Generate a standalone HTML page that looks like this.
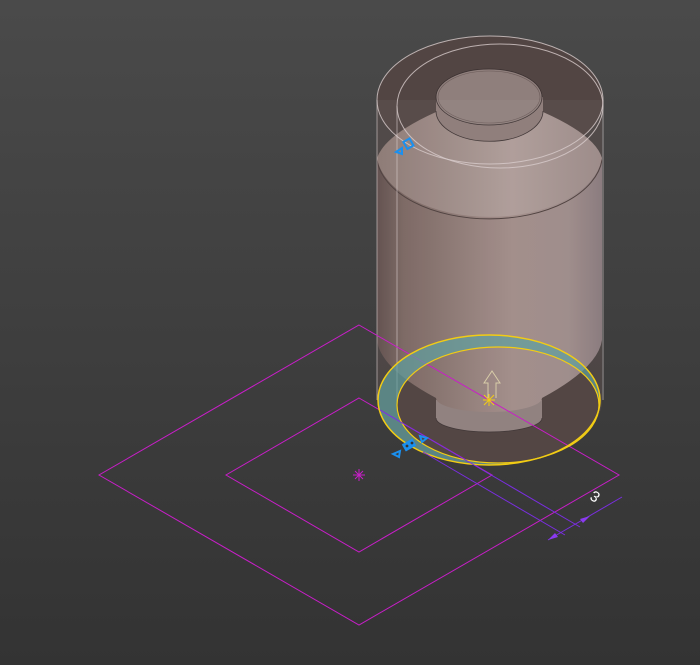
<!DOCTYPE html>
<html><head><style>
html,body{margin:0;padding:0;width:700px;height:665px;overflow:hidden;background:linear-gradient(#4a4a4a,#333333);}
svg{display:block}
</style></head><body>
<svg width="700" height="665" viewBox="0 0 700 665" xmlns="http://www.w3.org/2000/svg">
<defs>
<linearGradient id="body" x1="0" x2="1" y1="0" y2="0">
<stop offset="0" stop-color="#5e4d4b"/>
<stop offset="0.12" stop-color="#796560"/>
<stop offset="0.6" stop-color="#a08b87"/>
<stop offset="0.85" stop-color="#9c8a88"/>
<stop offset="1" stop-color="#87777a"/>
</linearGradient>
<linearGradient id="sh" x1="0" x2="1">
<stop offset="0" stop-color="#8a7772"/>
<stop offset="0.6" stop-color="#ad9b97"/>
<stop offset="1" stop-color="#9a8886"/>
</linearGradient>
</defs>
<ellipse cx="489" cy="400" rx="111" ry="64" fill="#4b3d3b"/>
<path d="M377 100 L377 400 A112 64 0 0 0 602 400 L602 100 Z" fill="#4f4240" opacity="0.55"/>
<ellipse cx="490" cy="100" rx="113" ry="64" fill="#524543"/>
<path d="M436 400 L436 418 A53 14 0 0 0 542 418 L542 400 Z" fill="#8d7d7b"/>
<path d="M436 418 A53 14 0 0 0 542 418" fill="none" stroke="#3a3030" stroke-width="0.8"/>
<path d="M377 160 L377 340 Q380 368 436 398 A53 14 0 0 0 542 398 Q598 368 602 340 L602 160 Z" fill="url(#body)"/>
<path d="M436 112 Q385 135 377 158 A113 65 0 0 0 602 158 Q595 135 543 112 Z" fill="url(#sh)"/>
<path d="M377 160 A113 65 0 0 0 602 160" fill="none" stroke="#4a3c3a" stroke-width="1"/>
<path d="M436 97 L436 111 A53 30 0 0 0 543 111 L543 97 Z" fill="#8c7a77"/>
<path d="M436 111 A53 30 0 0 0 543 111" fill="none" stroke="#3a3030" stroke-width="0.8"/>
<ellipse cx="489" cy="97" rx="53" ry="28" fill="#8f7f7c" stroke="#3a3030" stroke-width="0.8"/>
<ellipse cx="489" cy="97" rx="51" ry="26" fill="none" stroke="#6a5a58" stroke-width="0.6"/>
<path d="M377 100 L377 400 A112 64 0 0 0 602 400 L602 100 Z" fill="#ffffff" opacity="0.04"/>
<ellipse cx="490" cy="100" rx="113" ry="64" fill="none" stroke="#d8cccc" stroke-width="1" opacity="0.8"/>
<ellipse cx="500" cy="106" rx="103" ry="62" fill="none" stroke="#d8cccc" stroke-width="1" opacity="0.8"/>
<line x1="377" y1="100" x2="377" y2="400" stroke="#d8cccc" opacity="0.6"/>
<line x1="397" y1="106" x2="397" y2="404" stroke="#d8cccc" opacity="0.6"/>
<line x1="603" y1="100" x2="603" y2="400" stroke="#d8cccc" opacity="0.6"/>
<g fill="none" stroke="#c81ec8" stroke-width="1">
<path d="M359 325 L619 475 L359 625 L99 475 Z"/>
<path d="M359 398 L492 475 L359 552 L226 475 Z"/>
<path d="M353 475 h12 M359 469 v12 M355 471 l8 8 M363 471 l-8 8"/>
</g>
<path fill-rule="evenodd" d="M378 400 A111 65 0 1 0 600 400 A111 65 0 1 0 378 400 Z M397 405 A101 58 0 1 0 599 405 A101 58 0 1 0 397 405 Z" fill="#5fa0a0" opacity="0.7"/>
<ellipse cx="489" cy="400" rx="111" ry="65" fill="none" stroke="#f2cc14" stroke-width="1.5"/>
<ellipse cx="498" cy="405" rx="101" ry="58" fill="none" stroke="#f2cc14" stroke-width="1.2"/>
<g stroke="#7a2ee0" stroke-width="1" fill="none">
<line x1="380" y1="410" x2="580" y2="527"/>
<line x1="423" y1="452" x2="565" y2="535"/>
<line x1="548" y1="540" x2="622" y2="497"/>
</g>
<path d="M548 540 l10 -3 l-3 -4 z M590 516 l-10 3 l3 4 z" fill="#8a3af0"/>
<text x="0" y="0" font-family="Liberation Sans, sans-serif" font-size="15" fill="#fff" transform="translate(594 490) rotate(-60) scale(-1 1) rotate(90)">3</text>
<path d="M488 398 V383 h-4 l8 -12 l8 12 h-4 V398" fill="none" stroke="#d8cca8" stroke-width="1"/>
<path d="M483 400 h12 M489 394 v12 M484 395 l10 10 M494 395 l-10 10" stroke="#f2cc14" stroke-width="1"/>
<g fill="none" stroke="#1a90f0" stroke-width="2">
<path d="M396 152 l6 -4 l0 6 z"/>
<rect x="405" y="140" width="7" height="8" transform="rotate(-30 408 144)"/>
<path d="M393 454 l7 -3 l-1 6 z"/>
<path d="M420 436 l7 2 l-5 4 z"/>
</g>
<rect x="403" y="441" width="12" height="8" fill="#1a90f0" transform="rotate(-30 409 445)"/>
<circle cx="407" cy="446" r="1.4" fill="#333"/><circle cx="412" cy="443" r="1.4" fill="#333"/>
</svg>
</body></html>
